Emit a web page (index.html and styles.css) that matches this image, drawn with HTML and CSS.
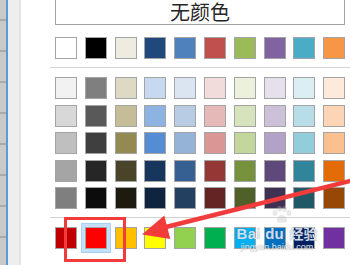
FILE: index.html
```html
<!DOCTYPE html>
<html lang="zh">
<head>
<meta charset="utf-8">
<link rel="stylesheet" href="styles.css">
</head>
<body>
<div class="page">
  <div class="ruler"></div>
  <div class="bluebar"></div>
  <div class="gutter"></div>
  <div class="panel">
    <div class="nocolor">无颜色</div>
    <div class="grid row1">
      <span class="sw" style="background:#FFFFFF"></span>
      <span class="sw" style="background:#000000"></span>
      <span class="sw" style="background:#EEECE1"></span>
      <span class="sw" style="background:#1F497D"></span>
      <span class="sw" style="background:#4F81BD"></span>
      <span class="sw" style="background:#C0504D"></span>
      <span class="sw" style="background:#9BBB59"></span>
      <span class="sw" style="background:#8064A2"></span>
      <span class="sw" style="background:#4BACC6"></span>
      <span class="sw" style="background:#F79646"></span>
    </div>
    <div class="sep"></div>
    <div class="grid shades">
      <span class="sw" style="background:#F2F2F2"></span>
      <span class="sw" style="background:#7F7F7F"></span>
      <span class="sw" style="background:#DDD9C3"></span>
      <span class="sw" style="background:#C6D9F0"></span>
      <span class="sw" style="background:#DBE5F1"></span>
      <span class="sw" style="background:#F2DCDB"></span>
      <span class="sw" style="background:#EBF1DD"></span>
      <span class="sw" style="background:#E5E0EC"></span>
      <span class="sw" style="background:#DBEEF3"></span>
      <span class="sw" style="background:#FDEADA"></span>

      <span class="sw" style="background:#D8D8D8"></span>
      <span class="sw" style="background:#595959"></span>
      <span class="sw" style="background:#C4BD97"></span>
      <span class="sw" style="background:#8DB3E2"></span>
      <span class="sw" style="background:#B8CCE4"></span>
      <span class="sw" style="background:#E5B9B7"></span>
      <span class="sw" style="background:#D7E3BC"></span>
      <span class="sw" style="background:#CCC1D9"></span>
      <span class="sw" style="background:#B7DDE8"></span>
      <span class="sw" style="background:#FBD5B5"></span>

      <span class="sw" style="background:#BFBFBF"></span>
      <span class="sw" style="background:#3F3F3F"></span>
      <span class="sw" style="background:#938953"></span>
      <span class="sw" style="background:#548DD4"></span>
      <span class="sw" style="background:#95B3D7"></span>
      <span class="sw" style="background:#D99694"></span>
      <span class="sw" style="background:#C3D69B"></span>
      <span class="sw" style="background:#B2A2C7"></span>
      <span class="sw" style="background:#92CDDC"></span>
      <span class="sw" style="background:#FAC08F"></span>

      <span class="sw" style="background:#A5A5A5"></span>
      <span class="sw" style="background:#262626"></span>
      <span class="sw" style="background:#494429"></span>
      <span class="sw" style="background:#17365D"></span>
      <span class="sw" style="background:#366092"></span>
      <span class="sw" style="background:#953734"></span>
      <span class="sw" style="background:#76923C"></span>
      <span class="sw" style="background:#5F497A"></span>
      <span class="sw" style="background:#31859B"></span>
      <span class="sw" style="background:#E36C09"></span>

      <span class="sw" style="background:#7F7F7F"></span>
      <span class="sw" style="background:#0C0C0C"></span>
      <span class="sw" style="background:#1D1B10"></span>
      <span class="sw" style="background:#0F243E"></span>
      <span class="sw" style="background:#244061"></span>
      <span class="sw" style="background:#632423"></span>
      <span class="sw" style="background:#4F6128"></span>
      <span class="sw" style="background:#3F3151"></span>
      <span class="sw" style="background:#205867"></span>
      <span class="sw" style="background:#974806"></span>
    </div>
    <div class="sep"></div>
    <div class="grid std">
      <span class="sw" style="background:#C00000"></span>
      <span class="sw selected" style="background:#FF0000"></span>
      <span class="sw" style="background:#FFC000"></span>
      <span class="sw" style="background:#FFFF00"></span>
      <span class="sw" style="background:#92D050"></span>
      <span class="sw" style="background:#00B050"></span>
      <span class="sw" style="background:#00B0F0"></span>
      <span class="sw" style="background:#0070C0"></span>
      <span class="sw" style="background:#002060"></span>
      <span class="sw" style="background:#7030A0"></span>
    </div>
  </div>

  <div class="watermark">
    <svg class="paw" width="22" height="18" viewBox="0 0 22 18">
      <ellipse cx="4" cy="7" rx="2.4" ry="3" />
      <ellipse cx="8.5" cy="3" rx="2.4" ry="3" />
      <ellipse cx="13.5" cy="3" rx="2.4" ry="3" />
      <ellipse cx="18" cy="7" rx="2.4" ry="3" />
      <path d="M6 15 C6 10 9 9 11 9 C13 9 16 10 16 15 C16 17 13 17 11 16.4 C9 17 6 17 6 15 Z" />
    </svg>
    <div class="wm-line">
      <span class="wm-bai">Bai</span><span class="wm-du">du</span><span class="wm-jy">经验</span>
    </div>
    <div class="wm-url">jingyan.baidu.com</div>
  </div>

  <svg class="annot" width="350" height="265" viewBox="0 0 350 265">
    <rect x="65.5" y="218.5" width="59" height="42" fill="none" stroke="#F23B3B" stroke-width="3"/>
    <line x1="166" y1="227" x2="356" y2="179.5" stroke="#F23B3B" stroke-width="4.5"/>
    <polygon points="142,234.5 164.3,215.5 170.3,239" fill="#F23B3B"/>
  </svg>
</div>
</body>
</html>
```

FILE: styles.css
```css
html, body {
  margin: 0;
  padding: 0;
  background: #ffffff;
}

.page {
  position: relative;
  width: 350px;
  height: 265px;
  overflow: hidden;
  display: flex;
  font-family: "Noto Sans CJK SC", "Liberation Sans", sans-serif;
}

.ruler {
  flex: 0 0 6px;
  background-color: #c9c9c9;
  background-image: repeating-linear-gradient(
    to bottom,
    transparent 0px,
    transparent 19px,
    #a9a9a9 19px,
    #a9a9a9 21px,
    transparent 21px,
    transparent 31px
  );
}

.bluebar {
  flex: 0 0 2px;
  background: #5b9bd5;
}

.gutter {
  flex: 0 0 11px;
  background: #eeeeee;
  border-right: 2px solid #e3e3e3;
}

.panel {
  flex: 1 1 auto;
  display: flex;
  flex-direction: column;
  padding-left: 29px;
}

.nocolor {
  box-sizing: border-box;
  margin: 0 0 0 5px;
  width: 290px;
  height: 25px;
  padding-top: 3px;
  border: 1px solid #a3a3a3;
  border-top: none;
  background: #ffffff;
  display: flex;
  align-items: flex-start;
  justify-content: center;
  font-family: "Liberation Sans", "Noto Sans CJK SC", sans-serif;
  font-size: 20px;
  line-height: 21px;
  color: #262626;
}

.grid {
  display: grid;
  grid-template-columns: repeat(10, 22px);
  column-gap: 7.8px;
  margin-left: 5px;
}

.row1 {
  margin-top: 12px;
}

.shades {
  margin-top: 9px;
  row-gap: 5.5px;
}

.std {
  margin-top: 9px;
}

.sep {
  height: 1px;
  margin-top: 8px;
  background: #d2d2d2;
}

.sw {
  box-sizing: border-box;
  display: block;
  width: 22px;
  height: 22px;
  border: 1px solid #a4a4a4;
}

.sw.selected {
  box-shadow: 0 0 0 3px #c4e0f8, 0 0 0 4px #a6d0f2;
}

.annot {
  position: absolute;
  left: 0;
  top: 0;
  pointer-events: none;
}

.watermark {
  position: absolute;
  left: 231px;
  top: 206px;
  width: 92px;
  display: flex;
  flex-direction: column;
  align-items: center;
  pointer-events: none;
}

.paw {
  fill: rgba(190, 190, 190, 0.35);
  margin-left: 10px;
}

.wm-line {
  display: flex;
  align-items: baseline;
  margin-top: 1px;
  font-family: "Liberation Sans", "Noto Sans CJK SC", sans-serif;
  font-weight: bold;
  font-size: 15px;
  line-height: 17px;
  color: rgba(255, 255, 255, 0.8);
  text-shadow: 0 0 1px rgba(60, 90, 140, 0.7);
}

.wm-bai {
  letter-spacing: 0.5px;
}

.wm-du {
  margin-left: 4px;
}

.wm-jy {
  margin-left: 6px;
  font-family: "Noto Sans CJK SC", sans-serif;
  font-size: 14px;
}

.wm-url {
  margin-top: 0px;
  font-family: "Liberation Sans", sans-serif;
  font-size: 9px;
  line-height: 10px;
  color: rgba(255, 255, 255, 0.8);
  text-shadow: 0 0 1px rgba(120, 120, 120, 0.8);
}
```
